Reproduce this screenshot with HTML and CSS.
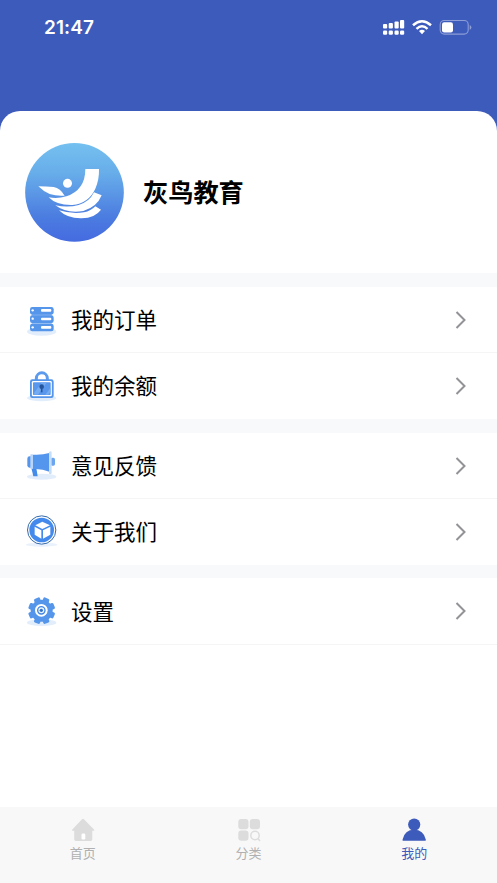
FILE: index.html
```html
<!DOCTYPE html>
<html lang="zh-CN">
<head>
<meta charset="utf-8">
<title>我的</title>
<link rel="stylesheet" href="styles.css">
</head>
<body>
<div class="app">
  <header class="status">
    <span class="time">21:47</span>
    <svg class="status-icons" viewBox="0 0 90 18" fill="#fff">
      <rect x="0" y="7" width="4.2" height="4.6" rx="1"/><rect x="5.7" y="6" width="4.2" height="5.6" rx="1"/><rect x="11.500" y="4.500" width="4.2" height="7.1" rx="1"/><rect x="17" y="3" width="4.2" height="8.6" rx="1"/>
      <rect x="0" y="13.500" width="4.2" height="4.2" rx="1.2"/><rect x="5.7" y="13.500" width="4.2" height="4.2" rx="1.2"/><rect x="11.500" y="13.500" width="4.2" height="4.2" rx="1.2"/><rect x="17" y="13.500" width="4.2" height="4.2" rx="1.2"/>
      <g fill="none" stroke="#fff" stroke-width="2.5"><path d="M30 8.300Q39 .2 48 8.300"/><path d="M33.500 11.800Q39 6.800 44.500 11.800"/></g>
      <path d="M36 14Q39 11.700 42 14L39 17.200Z"/>
      <rect x="57.200" y="3.500" width="28" height="13.600" rx="4" fill="none" stroke="#8d9dd7" stroke-width="1.100"/>
      <rect x="59" y="5.200" width="11" height="10.200" rx="2.200"/>
      <path d="M86.700 8v4.800q1.700-.8 1.700-2.400t-1.700-2.400" fill="#8d9dd7"/>
    </svg>
  </header>
  <main class="sheet">
    <section class="profile">
      <svg class="avatar" viewBox="30 21 300 300">
        <defs><linearGradient id="sky" x1="0" y1="0" x2="0" y2="1"><stop offset="0" stop-color="#74c0f0"/><stop offset=".3" stop-color="#68aeea"/><stop offset=".75" stop-color="#4b7ce0"/><stop offset="1" stop-color="#456be0"/></linearGradient></defs>
        <circle cx="178.500" cy="172" r="148" fill="url(#sky)"/>
        <g fill="#fff">
          <circle cx="157.500" cy="145" r="13.500"/>
          <path d="M70 154Q95 154 116 156Q136 160 149 182Q125 184 104 177Q86 170 70 154Z"/>
          <path d="M211 102H252Q253 134 241 161Q221 205 172 210Q124 211 101 187Q128 192 154 184Q211 165 211 102Z"/>
          <path d="M237 172L260 181Q246 216 205 228Q154 236 121 211Q159 219 191 210Q224 200 237 172Z"/>
          <path d="M241 214L258 224Q240 249 200 250Q157 251 132 226Q171 238 207 232Q228 228 241 214Z"/>
        </g>
      </svg>
      <h1 class="name">灰鸟教育</h1>
    </section>
    <nav class="group">
      <a class="row">
        <svg class="icon" viewBox="30 21 102 108"><ellipse cx="80" cy="110" rx="44" ry="12" fill="#e2edfc"/><path d="M50 50h60v46H50z" fill="#a9caf6"/><g fill="#5595ea"><rect x="45" y="36" width="71" height="23" rx="7"/><rect x="45" y="61" width="71" height="23" rx="7"/><rect x="45" y="86" width="71" height="23" rx="7"/></g><g fill="#fff"><circle cx="53" cy="46" r="3.500"/><circle cx="53" cy="71" r="3.500"/><circle cx="53" cy="97" r="3.500"/><rect x="78" y="42" width="31" height="8" rx="3"/><rect x="78" y="68" width="31" height="8" rx="3"/><rect x="78" y="93" width="31" height="8" rx="3"/></g></svg>
        <span class="label">我的订单</span>
        <svg class="arrow" viewBox="0 0 12 20"><path d="M1.500 2l8 8-8 8"/></svg>
      </a>
      <a class="row">
        <svg class="icon" viewBox="30 24 102 108"><ellipse cx="80" cy="114" rx="44" ry="10" fill="#e2edfc"/><path d="M64 60V55a16 16 0 0 1 33 0v5" fill="none" stroke="#5b9aec" stroke-width="9"/><rect x="45" y="58" width="71" height="56" rx="7" fill="#5595ea"/><rect x="50.500" y="63" width="60" height="46" rx="4" fill="#fff"/><rect x="54" y="67" width="53" height="38" rx="2" fill="#5997ec"/><path d="M57 99l23-31h15l-26 36H58zM91 104l15-20v12l-6 8z" fill="#74abf1"/><circle cx="80" cy="80" r="7" fill="#24549b"/><path d="M80 82v15" stroke="#24549b" stroke-width="5"/></svg>
        <span class="label">我的余额</span>
        <svg class="arrow" viewBox="0 0 12 20"><path d="M1.500 2l8 8-8 8"/></svg>
      </a>
    </nav>
    <nav class="group">
      <a class="row">
        <svg class="icon" viewBox="30 24 102 108"><ellipse cx="80" cy="110" rx="44" ry="9" fill="#e2edfc"/><rect x="37" y="49" width="17" height="34" rx="7" fill="#5594eb"/><rect x="107" y="53" width="13" height="24" rx="5" fill="#6ba4ef"/><path d="M49 84h15l4 25H55z" fill="#438be9"/><path d="M53 44Q80 46 103 39V95Q80 85 53 87z" fill="#5496ed"/><rect x="46" y="43" width="8" height="44" rx="2" fill="#b9d5f9"/><path d="M102 36q8-6 8 2v60q0 7-8 3z" fill="#c7def9"/></svg>
        <span class="label">意见反馈</span>
        <svg class="arrow" viewBox="0 0 12 20"><path d="M1.500 2l8 8-8 8"/></svg>
      </a>
      <a class="row">
        <svg class="icon" viewBox="30 24 102 108"><ellipse cx="80" cy="116" rx="47" ry="6" fill="#e9f1fd"/><circle cx="80" cy="72" r="42.500" fill="#fff" stroke="#346aab" stroke-width="3"/><circle cx="80" cy="72" r="37" fill="#448aed"/><g fill="#fff"><path d="M82 47l23 11-23 11-21-11z"/><path d="M59 62l20 11v25l-20-12zM106 62v24L84 98V73z"/></g></svg>
        <span class="label">关于我们</span>
        <svg class="arrow" viewBox="0 0 12 20"><path d="M1.500 2l8 8-8 8"/></svg>
      </a>
    </nav>
    <nav class="group">
      <a class="row">
        <svg class="icon" viewBox="30 21 102 108">
          <defs><rect id="tooth" x="-9.500" y="-40.500" width="19" height="81" rx="4"/></defs>
          <ellipse cx="80" cy="110" rx="44" ry="10" fill="#e2edfc"/>
          <g transform="translate(80 74)" fill="#5595ea"><circle r="33"/><use href="#tooth" transform="rotate(22.500)"/><use href="#tooth" transform="rotate(67.500)"/><use href="#tooth" transform="rotate(112.500)"/><use href="#tooth" transform="rotate(157.500)"/></g>
          <circle cx="79" cy="73" r="19" fill="#fff"/><circle cx="79" cy="73" r="11" fill="#e9f3fe" stroke="#4287e5" stroke-width="4"/><circle cx="79" cy="73" r="5" fill="#3472c6"/>
        </svg>
        <span class="label">设置</span>
        <svg class="arrow" viewBox="0 0 12 20"><path d="M1.500 2l8 8-8 8"/></svg>
      </a>
    </nav>
  </main>
  <footer class="tabs">
    <a class="tab">
      <svg class="tab-icon" viewBox="0 0 24 24"><path d="M11 1.200q1-.8 2 0l10.200 10.600q.5.900-.5.900h-1.400v8.600q0 1.700-1.700 1.700H4.900q-1.700 0-1.700-1.700v-8.600H1.600q-1 0-.5-.9z"/><rect x="10.500" y="15.500" width="3.800" height="6" rx="1.200" fill="#fff"/></svg>
      <span>首页</span>
    </a>
    <a class="tab">
      <svg class="tab-icon" viewBox="0 0 24 24"><rect x="1.300" y="1" width="10.200" height="10.200" rx="3"/><rect x="12.800" y="1" width="10.200" height="10.200" rx="3"/><rect x="1.300" y="12.600" width="10.200" height="10.200" rx="3"/><g fill="none" stroke="#dcdcdc" stroke-width="1.500"><circle cx="18" cy="17.500" r="4.200"/><path d="M21 20.500l2 2.500"/></g></svg>
      <span>分类</span>
    </a>
    <a class="tab active">
      <svg class="tab-icon" viewBox="0 0 24 24"><circle cx="12.200" cy="6.600" r="6.100"/><path d="M1 22.800q-.7 0-.4-1.300Q2.700 11.800 12.100 11.800t11.700 9.700q.2 1.300-.5 1.300z"/></svg>
      <span>我的</span>
    </a>
  </footer>
</div>
</body>
</html>
```
FILE: styles.css
```css
* { box-sizing: border-box; }
body {
  margin: 0;
  font-family: "Noto Sans CJK SC", sans-serif;
  color: #000;
}
.app {
  display: flex;
  flex-direction: column;
  height: 883px;
  background: linear-gradient(#3d5bba 180px, #fff 180px);
  overflow: hidden;
}
.status {
  display: flex;
  justify-content: space-between;
  align-items: flex-start;
  flex: 0 0 110.5px;
  padding: 17px 24px 0 44px;
}
.time {
  font: 600 19px/22px Inter, sans-serif;
  letter-spacing: .1px;
  color: #fff;
}
.status-icons { width: 90px; height: 18px; }
.sheet {
  flex: 1;
  background: #fff;
  border-radius: 20px 20px 0 0;
}
.profile {
  display: flex;
  align-items: center;
  gap: 18px;
  height: 162.5px;
  padding-left: 25px;
}
.avatar { width: 100px; height: 100px; }
.name {
  margin: 0;
  padding-bottom: 1px;
  font-size: 25.2px;
  font-weight: 700;
  line-height: 36px;
}
.group { border-top: 14px solid #f8f9fb; }
.group:last-child { border-top-width: 13px; }
.row {
  display: flex;
  align-items: center;
  height: 66px;
  padding: 0 30px 0 25px;
  border-bottom: 1px solid #f5f5f6;
}
.group .row:last-child:not(:first-child) { border-bottom: 0; }
.group:last-child .row { height: 67px; }
.icon { width: 34px; height: 36px; }
.label {
  flex: 1;
  margin-left: 12px;
  padding-bottom: 2px;
  font-size: 21.5px;
  line-height: 32px;
}
.group:last-child .label { padding-bottom: 0; }
.arrow {
  width: 12px;
  height: 20px;
  fill: none;
  stroke: #929397;
  stroke-width: 2;
}
.tabs {
  display: flex;
  flex: 0 0 76px;
  background: #f8f8f8;
}
.tab {
  display: flex;
  flex: 1;
  flex-direction: column;
  align-items: center;
  padding-top: 11px;
  font-size: 13px;
  line-height: 20px;
  color: #b0b0b0;
}
.tab-icon { width: 24px; height: 24px; margin-bottom: 1px; fill: #dcdcdc; }
.active { color: #3d5bba; }
.active .tab-icon { fill: #3d5bba; }
```
